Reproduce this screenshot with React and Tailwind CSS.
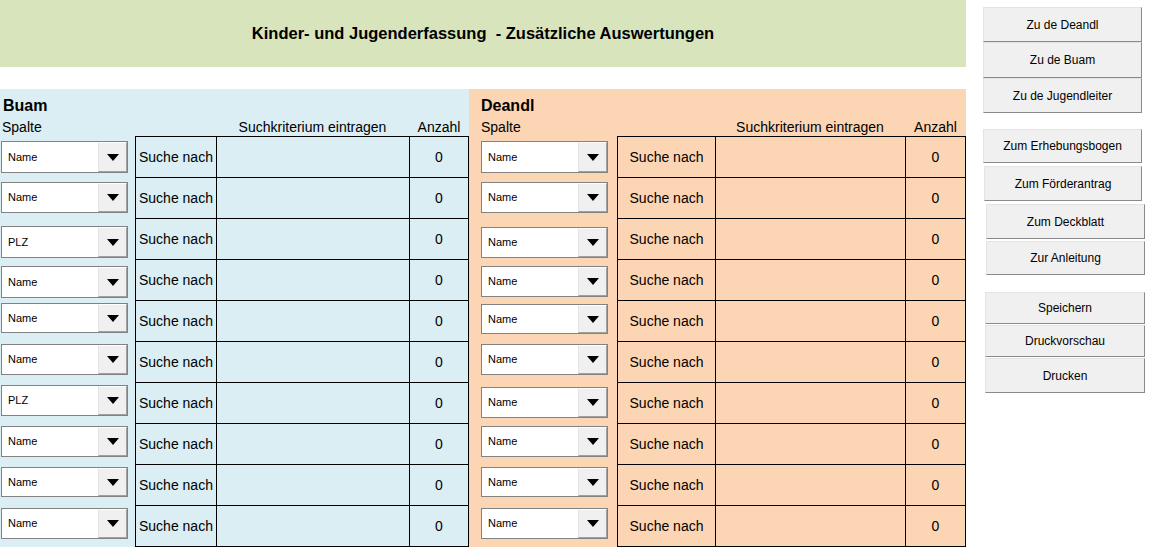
import React from "react";

const leftRows = [
  { v: "Name", mt: "mt-[5px]", h: "h-[32px]" },
  { v: "Name", mt: "mt-[5px]", h: "h-[31px]" },
  { v: "PLZ", mt: "mt-[8px]", h: "h-[32px]" },
  { v: "Name", mt: "mt-[7px]", h: "h-[32px]" },
  { v: "Name", mt: "mt-[3px]", h: "h-[30px]" },
  { v: "Name", mt: "mt-[3px]", h: "h-[31px]" },
  { v: "PLZ", mt: "mt-[3px]", h: "h-[31px]" },
  { v: "Name", mt: "mt-[3px]", h: "h-[31px]" },
  { v: "Name", mt: "mt-[3px]", h: "h-[30px]" },
  { v: "Name", mt: "mt-[3px]", h: "h-[31px]" },
];

const rightRows = [
  { v: "Name", mt: "mt-[5px]", h: "h-[32px]" },
  { v: "Name", mt: "mt-[5px]", h: "h-[31px]" },
  { v: "Name", mt: "mt-[9px]", h: "h-[31px]" },
  { v: "Name", mt: "mt-[7px]", h: "h-[31px]" },
  { v: "Name", mt: "mt-[4px]", h: "h-[30px]" },
  { v: "Name", mt: "mt-[3px]", h: "h-[31px]" },
  { v: "Name", mt: "mt-[5px]", h: "h-[31px]" },
  { v: "Name", mt: "mt-[3px]", h: "h-[31px]" },
  { v: "Name", mt: "mt-[3px]", h: "h-[30px]" },
  { v: "Name", mt: "mt-[3px]", h: "h-[31px]" },
];

function Dropdown({ value, mt, h, ml }) {
  return (
    <div className={`flex w-[127px] border border-[#828282] bg-white ${mt} ${h} ${ml}`}>
      <div className="flex flex-1 items-center pl-[6px] text-[11px] text-black">{value}</div>
      <div className="flex w-[29px] items-center justify-center border-l border-t border-l-[#e3e3e3] border-t-[#ffffff] border-r border-b border-r-[#a0a0a0] border-b-[#a0a0a0] bg-[#f0f0f0]">
        <div className="h-0 w-0 border-x-[6.5px] border-x-transparent border-t-[7px] border-t-black" />
      </div>
    </div>
  );
}

function Panel({ title, rows, bg, cols, ml, center }) {
  return (
    <div className={`flex h-[458px] flex-col ${bg}`}>
      <div className={`h-[26px] pt-[8px] text-[16px] font-bold leading-[18px] text-black ${center ? "pl-[12px]" : "pl-[3px]"}`}>
        {title}
      </div>
      <div className={`grid h-[21px] text-[14px] leading-[16px] text-black ${cols}`}>
        <div className={`pt-[4px] ${center ? "pl-[12px]" : "pl-[2px]"}`}>Spalte</div>
        <div />
        <div className="pt-[4px] text-center">Suchkriterium eintragen</div>
        <div className="pt-[4px] text-center">Anzahl</div>
      </div>
      {rows.map((r, i) => {
        const last = i === rows.length - 1;
        const b = last ? "border-b" : "";
        return (
          <div key={i} className={`grid ${cols} ${last ? "h-[42px]" : "h-[41px]"}`}>
            <div>
              <Dropdown value={r.v} mt={r.mt} h={r.h} ml={ml} />
            </div>
            <div
              className={`flex items-center border-l border-t border-black text-[14px] text-black ${b} ${
                center ? "justify-center" : "pl-[3px]"
              }`}
            >
              Suche nach
            </div>
            <div className={`border-l border-t border-black ${b}`} />
            <div className={`flex items-center justify-center border-l border-r border-t border-black text-[14px] text-black ${b}`}>
              0
            </div>
          </div>
        );
      })}
    </div>
  );
}

const buttons = [
  { t: "Zu de Deandl", c: "mt-[7px] ml-[17px] w-[159px] h-[35px]" },
  { t: "Zu de Buam", c: "ml-[17px] w-[159px] h-[36px]" },
  { t: "Zu de Jugendleiter", c: "ml-[17px] w-[159px] h-[35px]" },
  { t: "Zum Erhebungsbogen", c: "mt-[16px] ml-[17px] w-[159px] h-[34px]" },
  { t: "Zum Förderantrag", c: "mt-[3px] ml-[18px] w-[158px] h-[35px]" },
  { t: "Zum Deckblatt", c: "mt-[3px] ml-[20px] w-[159px] h-[35px]" },
  { t: "Zur Anleitung", c: "mt-[2px] ml-[20px] w-[159px] h-[34px]" },
  { t: "Speichern", c: "mt-[17px] ml-[19px] w-[160px] h-[32px]" },
  { t: "Druckvorschau", c: "mt-[1px] ml-[19px] w-[160px] h-[32px]" },
  { t: "Drucken", c: "mt-[1px] ml-[19px] w-[160px] h-[35px]" },
];

export default function App() {
  return (
    <div className="flex h-[557px] w-[1153px] bg-white font-['Liberation_Sans',Arial,sans-serif]">
      <div className="flex w-[966px] flex-col">
        <div className="flex h-[67px] items-center justify-center bg-[#d8e4bc] whitespace-pre text-[16.5px] font-bold text-black">
          {"Kinder- und Jugenderfassung  - Zusätzliche Auswertungen"}
        </div>
        <div className="mt-[22px] flex">
          <div className="w-[469px]">
            <Panel
              title="Buam"
              rows={leftRows}
              bg="bg-[#daeef3]"
              cols="grid-cols-[135px_81px_193px_60px]"
              ml="ml-[1px]"
              center={false}
            />
          </div>
          <div className="w-[497px]">
            <Panel
              title="Deandl"
              rows={rightRows}
              bg="bg-[#fcd5b4]"
              cols="grid-cols-[148px_98px_190px_61px]"
              ml="ml-[12px]"
              center={true}
            />
          </div>
        </div>
      </div>
      <div className="flex flex-1 flex-col">
        {buttons.map((b) => (
          <div
            key={b.t}
            className={`flex items-center justify-center border border-t-[#e3e3e3] border-l-[#e3e3e3] border-r-[#8a8a8a] border-b-[#8a8a8a] bg-[#f0f0f0] text-[12px] text-black ${b.c}`}
          >
            {b.t}
          </div>
        ))}
      </div>
    </div>
  );
}
